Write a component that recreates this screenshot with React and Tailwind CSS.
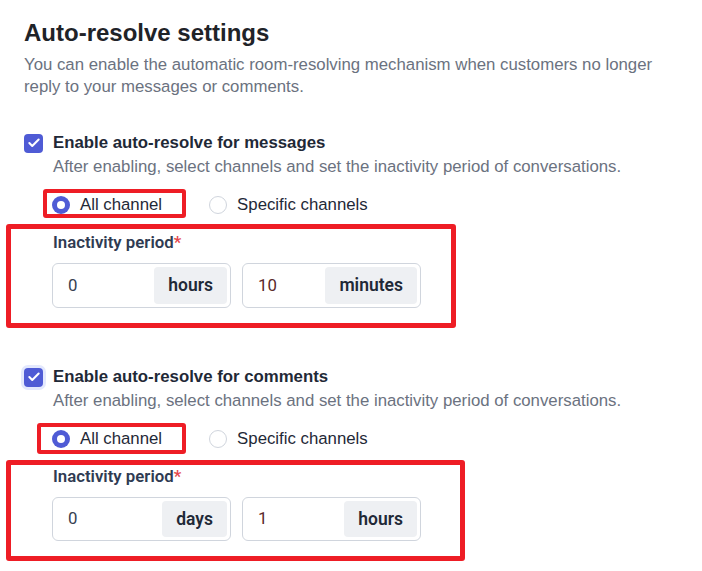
import { Check } from "lucide-react";

function Checkbox({ ring }) {
  return (
    <div
      className={
        "flex h-[19px] w-[19px] shrink-0 items-center justify-center rounded-[4px] bg-[#4f5bd5] " +
        (ring ? "ring-[3px] ring-[#e3e8fd]" : "")
      }
    >
      <Check size={14} strokeWidth={3.5} color="white" />
    </div>
  );
}

function Radio({ checked }) {
  return checked ? (
    <div className="flex h-[18px] w-[18px] items-center justify-center rounded-full bg-[#4f5bd5]">
      <div className="h-[8px] w-[8px] rounded-full bg-white" />
    </div>
  ) : (
    <div className="h-[18px] w-[18px] rounded-full border border-[#d0d5dd] bg-white" />
  );
}

function UnitInput({ value, unit, valueColor }) {
  return (
    <div className="flex h-full w-[179px] items-stretch rounded-[6px] border border-[#d0d5dd] bg-white p-[3px]">
      <div className={"flex flex-1 items-center pl-[12px] text-[16.8px] " + valueColor}>{value}</div>
      <div className="flex items-center rounded-[4px] bg-[#eef0f3] px-[14px] text-[17.5px] font-semibold text-[#1f2937]">
        {unit}
      </div>
    </div>
  );
}

function Section({ label, ring, units, values, gapTop, inputH }) {
  return (
    <div className={gapTop}>
      <div className="flex h-[22px] items-center gap-[10px]">
        <Checkbox ring={ring} />
        <span className="text-[16.8px] font-bold text-[#1f2937]">{label}</span>
      </div>
      <div className="mt-[3px] pl-[29px] text-[16.8px] leading-[20px] text-[#6b7280]">
        After enabling, select channels and set the inactivity period of conversations.
      </div>
      <div className="mt-[14px] flex h-[28px] items-center pl-[28px] text-[16.8px] text-[#1f2937]">
        <Radio checked />
        <span className="ml-[10px]">All channel</span>
        <div className="ml-[47px]">
          <Radio />
        </div>
        <span className="ml-[10px]">Specific channels</span>
      </div>
      <div
        className="mt-[13px] pl-[29px] text-[16.8px] font-semibold leading-[20px] text-[#2f3b52]"
        style={{ fontFamily: "Roboto, sans-serif" }}
      >
        Inactivity period<span className="text-[#e5484d]">*</span>
      </div>
      <div
        className={"mt-[11px] flex gap-[11px] pl-[28px] " + inputH}
        style={{ fontFamily: "Roboto, sans-serif" }}
      >
        <UnitInput value={values[0]} unit={units[0]} valueColor="text-[#374151]" />
        <UnitInput value={values[1]} unit={units[1]} valueColor="text-[#5a2a2a]" />
      </div>
    </div>
  );
}

export default function App() {
  return (
    <div
      className="relative h-[571px] w-[702px] overflow-hidden bg-white pl-[24px] pt-[19px]"
      style={{ fontFamily: "'Liberation Sans', Arial, sans-serif" }}
    >
      <h1 className="text-[24px] font-bold leading-[28px] text-[#1f2328]">Auto-resolve settings</h1>
      <p className="mt-[7px] w-[660px] text-[16.8px] leading-[22px] text-[#6b7280]">
        You can enable the automatic room-resolving mechanism when customers no longer reply to your
        messages or comments.
      </p>

      <Section
        label="Enable auto-resolve for messages"
        units={["hours", "minutes"]}
        values={["0", "10"]}
        gapTop="mt-[34px]"
        inputH="h-[45px]"
      />
      <Section
        label="Enable auto-resolve for comments"
        ring
        units={["days", "hours"]}
        values={["0", "1"]}
        gapTop="mt-[58px]"
        inputH="h-[44px]"
      />

      {/* red annotation boxes */}
      <div className="pointer-events-none absolute left-[43px] top-[189px] h-[29px] w-[143px] rounded-[3px] border-[4px] border-[#ee1d25]" />
      <div className="pointer-events-none absolute left-[6px] top-[224px] h-[104px] w-[450px] rounded-[3px] border-[5px] border-[#ee1d25]" />
      <div className="pointer-events-none absolute left-[37px] top-[423px] h-[31px] w-[149px] rounded-[3px] border-[4px] border-[#ee1d25]" />
      <div className="pointer-events-none absolute left-[6px] top-[460px] h-[101px] w-[459px] rounded-[3px] border-[5px] border-[#ee1d25]" />
    </div>
  );
}
